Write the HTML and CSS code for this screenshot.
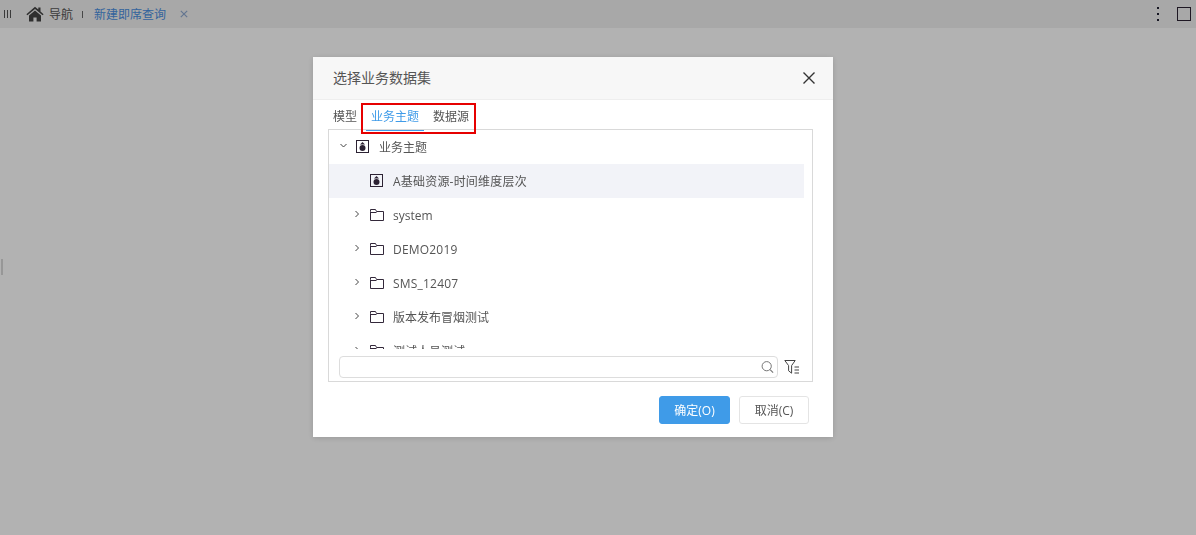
FILE: index.html
```html
<!DOCTYPE html>
<html lang="en">
<head>
    <meta charset="UTF-8">
    <meta name="viewport" content="width=device-width, initial-scale=1.0">
    <title>选择业务数据集</title>
    <link rel="stylesheet" href="styles.css">
</head>
<body>
    <header class="topbar">
        <span class="grip"><i></i><i></i><i></i></span>
        <svg class="home-icon" width="18" height="16" viewBox="0 0 18 16">
            <path d="M9 .8 .4 8.2l1 1.1L9 3l7.6 6.3 1-1.1-3.1-2.7V1.4h-2.2v2.2z" fill="#444"/>
            <path d="M3 9.6 9 4.5l6 5.1V15.6h-4.4v-4.2H7.4v4.2H3z" fill="#444"/>
        </svg>
        <span class="nav-label">导航</span>
        <span class="nav-sep"></span>
        <span class="nav-tab">新建即席查询</span>
        <svg class="nav-close" width="8" height="8" viewBox="0 0 8 8">
            <path d="M.8.8l6.4 6.4M7.2.8.8 7.2" stroke="#8fa9cf" stroke-width="1.2" fill="none"/>
        </svg>
        <span class="topbar-right">
            <span class="dots"><i></i><i></i><i></i></span>
            <span class="maximize"></span>
        </span>
    </header>
    <span class="side-handle"></span>

    <div class="overlay">
        <div class="dialog">
            <div class="dialog-head">
                <span class="dialog-title">选择业务数据集</span>
                <svg width="14" height="14" viewBox="0 0 14 14">
                    <path d="M1.5 1.5l11 11M12.5 1.5l-11 11" stroke="#333" stroke-width="1.4" fill="none"/>
                </svg>
            </div>
            <div class="tabs">
                <span class="tab">模型</span>
                <span class="tab active">业务主题</span>
                <span class="tab">数据源</span>
            </div>
            <div class="highlight-box"></div>
            <div class="panel">
                <div class="tree">
                    <div class="row">
                        <svg class="arrow" width="9" height="9" viewBox="0 0 9 9"><path d="M1.5 3l3 3 3-3" stroke="#444" stroke-width="1" fill="none"/></svg>
                        <svg class="subject-icon" width="13" height="13" viewBox="0 0 13 13"><use href="#subject"/></svg>
                        <span>业务主题</span>
                    </div>
                    <div class="row child selected">
                        <svg class="subject-icon" width="13" height="13" viewBox="0 0 13 13"><use href="#subject"/></svg>
                        <span class="latin">A基础资源-时间维度层次</span>
                    </div>
                    <div class="row sub">
                        <svg class="arrow" width="9" height="9" viewBox="0 0 9 9"><use href="#right"/></svg>
                        <svg class="folder" width="14" height="12" viewBox="0 0 14 12"><use href="#folder"/></svg>
                        <span>system</span>
                    </div>
                    <div class="row sub">
                        <svg class="arrow" width="9" height="9" viewBox="0 0 9 9"><use href="#right"/></svg>
                        <svg class="folder" width="14" height="12" viewBox="0 0 14 12"><use href="#folder"/></svg>
                        <span class="latin">DEMO2019</span>
                    </div>
                    <div class="row sub">
                        <svg class="arrow" width="9" height="9" viewBox="0 0 9 9"><use href="#right"/></svg>
                        <svg class="folder" width="14" height="12" viewBox="0 0 14 12"><use href="#folder"/></svg>
                        <span class="latin">SMS_12407</span>
                    </div>
                    <div class="row sub">
                        <svg class="arrow" width="9" height="9" viewBox="0 0 9 9"><use href="#right"/></svg>
                        <svg class="folder" width="14" height="12" viewBox="0 0 14 12"><use href="#folder"/></svg>
                        <span>版本发布冒烟测试</span>
                    </div>
                    <div class="row sub">
                        <svg class="arrow" width="9" height="9" viewBox="0 0 9 9"><use href="#right"/></svg>
                        <svg class="folder" width="14" height="12" viewBox="0 0 14 12"><use href="#folder"/></svg>
                        <span>测试人员测试</span>
                    </div>
                </div>
                <div class="search-row">
                    <div class="search">
                        <svg width="14" height="14" viewBox="0 0 14 14">
                            <circle cx="6.7" cy="6.2" r="4.6" stroke="#777" stroke-width="1" fill="none"/>
                            <path d="M10.1 9.6l3 3" stroke="#777" stroke-width="1.1"/>
                        </svg>
                    </div>
                    <svg width="16" height="16" viewBox="0 0 16 16">
                        <path d="M.8 1.5h10.4L7.6 6.6v7.6L4.6 11.8V6.6z" stroke="#444" stroke-width="1" fill="none"/>
                        <path d="M10.5 8h4.5M10.5 11h4.5M10.5 14h4.5" stroke="#444" stroke-width="1"/>
                    </svg>
                </div>
            </div>
            <div class="dialog-foot">
                <button class="btn primary">确定(O)</button>
                <button class="btn">取消(C)</button>
            </div>
        </div>
    </div>

    <svg class="defs" width="0" height="0">
        <defs>
            <g id="subject">
                <rect x=".5" y=".5" width="12" height="12" fill="none" stroke="#2c2233"/>
                <path d="M6.5 2 9 4.4H4z" fill="#2c2233"/>
                <circle cx="6.5" cy="8" r="3" fill="#2c2233"/>
            </g>
            <path id="right" d="M2.5 2 5.5 5 2.5 8" stroke="#444" stroke-width="1" fill="none"/>
            <path id="folder" d="M.5 2.5v-2h5l1 2h7v9H.5zM.5 3.5h6" stroke="#33283a" stroke-width="1" fill="none"/>
        </defs>
    </svg>
</body>
</html>
```

FILE: styles.css
```css
* {
    box-sizing: border-box;
}
html, body {
    height: 100%;
}
body {
    margin: 0;
    background-color: #fff;
    font-family: "Open Sans", "Noto Sans CJK SC", sans-serif;
    font-size: 12px;
    color: #555;
    overflow: hidden;
}
.defs {
    position: absolute;
}
.topbar {
    height: 28px;
    background-color: #f1f1f1;
    display: flex;
    align-items: center;
    padding-left: 4px;
    color: #555;
}
.grip {
    display: flex;
    gap: 2px;
    margin-right: 15px;
}
.grip i {
    width: 1px;
    height: 8px;
    background-color: #555;
}
.home-icon {
    margin-right: 5px;
}
.nav-label {
    margin-right: 9px;
}
.nav-sep {
    width: 1px;
    height: 7px;
    background-color: #666;
    margin-right: 11px;
}
.nav-tab {
    color: #4a8fe0;
    margin-right: 14px;
}
.topbar-right {
    margin-left: auto;
    display: flex;
    align-items: center;
    gap: 18px;
    padding-right: 5px;
}
.dots {
    display: flex;
    flex-direction: column;
    gap: 4px;
}
.dots i {
    width: 2px;
    height: 2px;
    background-color: #223;
}
.maximize {
    width: 14px;
    height: 14px;
    border: 1px solid #2c2233;
}
.side-handle {
    position: absolute;
    left: 1px;
    top: 259px;
    width: 2px;
    height: 16px;
    background-color: #d9d9d9;
    z-index: 1;
}
.overlay {
    position: fixed;
    inset: 0;
    background-color: rgba(0, 0, 0, 0.3);
    display: flex;
    align-items: flex-start;
    padding: 57px 0 0 313px;
    z-index: 2;
}
.dialog {
    position: relative;
    width: 520px;
    height: 380px;
    background-color: #fff;
    box-shadow: 0 1px 6px rgba(0, 0, 0, 0.15);
    display: flex;
    flex-direction: column;
}
.dialog-head {
    height: 43px;
    flex-shrink: 0;
    background-color: #f7f7f7;
    border-bottom: 1px solid #eee;
    display: flex;
    align-items: center;
    justify-content: space-between;
    padding: 0 17px 0 20px;
}
.dialog-title {
    font-size: 14px;
    color: #555;
    margin-top: -2px;
}
.tabs {
    display: flex;
    height: 30px;
    flex-shrink: 0;
    padding-left: 20px;
    gap: 9px;
    position: relative;
    margin-bottom: -1px;
}
.tab {
    line-height: 33px;
    height: 31px;
    color: #555;
}
.tab.active {
    color: #3f9be8;
    border-bottom: 1px solid #3f9be8;
    padding: 0 5px;
}
.highlight-box {
    position: absolute;
    left: 48px;
    top: 46px;
    width: 115px;
    height: 31px;
    border: 2px solid #e60000;
}
.panel {
    margin: 0 20px 0 15px;
    height: 253px;
    flex-shrink: 0;
    border: 1px solid #d9d9d9;
}
.tree {
    height: 219px;
    overflow: hidden;
}
.row {
    height: 34px;
    display: flex;
    align-items: center;
    width: 475px;
    padding-left: 10px;
    color: #555;
}
.row .arrow {
    margin-right: 8px;
    margin-top: -4px;
}
.subject-icon {
    margin-right: 10px;
    margin-top: -1px;
}
.row.child {
    padding-left: 41px;
}
.row.sub {
    padding-left: 24px;
}
.row.selected {
    background-color: #f2f3f8;
}
.row .folder {
    margin-right: 9px;
}
.latin {
    letter-spacing: 0.2px;
}
.search-row {
    display: flex;
    align-items: center;
    padding: 7px 0 0 10px;
    gap: 6px;
}
.search {
    width: 439px;
    height: 22px;
    border: 1px solid #ddd;
    border-radius: 4px;
    display: flex;
    align-items: center;
    justify-content: flex-end;
    padding-right: 3px;
}
.dialog-foot {
    display: flex;
    justify-content: flex-end;
    gap: 9px;
    padding: 14px 24px 0 0;
}
.btn {
    width: 70px;
    height: 28px;
    border: 1px solid #e4e4e4;
    border-radius: 3px;
    background-color: #fff;
    color: #555;
    font-family: inherit;
    font-size: 12px;
    padding: 0;
}
.btn.primary {
    width: 71px;
    border-color: #3f9be8;
    background-color: #3f9be8;
    color: #fff;
}
```
